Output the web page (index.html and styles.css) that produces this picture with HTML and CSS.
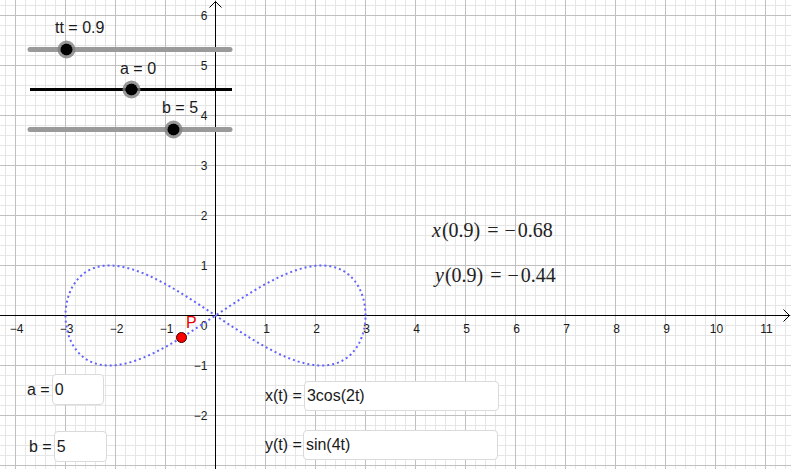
FILE: index.html
```html
<!DOCTYPE html>
<html>
<head>
<meta charset="utf-8">
<link rel="stylesheet" href="styles.css">
</head>
<body>
<div class="applet">
  <svg class="canvas" width="791" height="469" viewBox="0 0 791 469" xmlns="http://www.w3.org/2000/svg">
    <defs>
      <pattern id="grid" x="15" y="15" width="50" height="50" patternUnits="userSpaceOnUse">
        <rect x="10" y="0" width="1" height="50" fill="#e6e6e6"/>
        <rect x="20" y="0" width="1" height="50" fill="#e6e6e6"/>
        <rect x="30" y="0" width="1" height="50" fill="#e6e6e6"/>
        <rect x="40" y="0" width="1" height="50" fill="#e6e6e6"/>
        <rect x="0" y="10" width="50" height="1" fill="#e6e6e6"/>
        <rect x="0" y="20" width="50" height="1" fill="#e6e6e6"/>
        <rect x="0" y="30" width="50" height="1" fill="#e6e6e6"/>
        <rect x="0" y="40" width="50" height="1" fill="#e6e6e6"/>
        <rect x="0" y="0" width="1" height="50" fill="#c0c0c0"/>
        <rect x="0" y="0" width="50" height="1" fill="#c0c0c0"/>
      </pattern>
    </defs>
    <rect x="0" y="0" width="791" height="469" fill="#fff"/>
    <rect x="0" y="0" width="791" height="469" fill="url(#grid)"/>

    <!-- axes -->
    <g class="axis">
      <line x1="0" y1="315.5" x2="790" y2="315.5"/>
      <line x1="215.5" y1="1.5" x2="215.5" y2="469"/>
      <polyline points="783.5,309.5 789.5,315.5 783.5,321.5"/>
      <polyline points="209.5,7.5 215.5,1.5 221.5,7.5"/>
    </g>

    <g class="ticks xt">
      <text x="16.5" y="332.5">−4</text>
      <text x="66.5" y="332.5">−3</text>
      <text x="116.5" y="332.5">−2</text>
      <text x="166.5" y="332.5">−1</text>
      <text x="266.5" y="332.5">1</text>
      <text x="316.5" y="332.5">2</text>
      <text x="366.5" y="332.5">3</text>
      <text x="416.5" y="332.5">4</text>
      <text x="466.5" y="332.5">5</text>
      <text x="516.5" y="332.5">6</text>
      <text x="566.5" y="332.5">7</text>
      <text x="616.5" y="332.5">8</text>
      <text x="666.5" y="332.5">9</text>
      <text x="716.5" y="332.5">10</text>
      <text x="766.5" y="332.5">11</text>
    </g>
    <g class="ticks yt">
      <text x="207.5" y="330">0</text>
      <text x="207.5" y="20">6</text>
      <text x="207.5" y="70">5</text>
      <text x="207.5" y="120">4</text>
      <text x="207.5" y="170">3</text>
      <text x="207.5" y="220">2</text>
      <text x="207.5" y="270">1</text>
      <text x="207.5" y="370">−1</text>
      <text x="207.5" y="420">−2</text>
    </g>

    <!-- curve -->
    <path id="curve" class="curve" d=""/>

    <!-- point P -->
    <circle class="pt" cx="181.5" cy="337.5" r="5"/>
    <text class="plabel" x="186" y="327.5">P</text>

    <!-- sliders -->
    <g class="slider">
      <line class="track grey" x1="30" y1="49.5" x2="230" y2="49.5"/>
      <circle class="halo" cx="66.5" cy="49.5" r="7.5"/>
      <circle class="knob" cx="66.5" cy="49.5" r="6"/>
      <text class="slabel" x="55" y="33">tt = 0.9</text>
    </g>
    <g class="slider">
      <line class="track black" x1="30" y1="89.5" x2="232" y2="89.5"/>
      <circle class="halo" cx="131.5" cy="89.5" r="7.5"/>
      <circle class="knob" cx="131.5" cy="89.5" r="6"/>
      <text class="slabel" x="120" y="74">a = 0</text>
    </g>
    <g class="slider">
      <line class="track grey" x1="30" y1="129.5" x2="230" y2="129.5"/>
      <circle class="halo" cx="173.5" cy="129.5" r="7.5"/>
      <circle class="knob" cx="173.5" cy="129.5" r="6"/>
      <text class="slabel" x="162" y="113">b = 5</text>
    </g>
  </svg>

  <div class="formula f1"><i>x</i>(0.9)<span class="rel">=</span><span class="neg">−</span>0.68</div>
  <div class="formula f2"><i>y</i>(0.9)<span class="rel">=</span><span class="neg">−</span>0.44</div>

  <div class="field fa"><span class="lbl">a =</span><div class="box">0</div></div>
  <div class="field fb"><span class="lbl">b =</span><div class="box">5</div></div>
  <div class="field fx"><span class="lbl">x(t) =</span><div class="box wide">3cos(2t)</div></div>
  <div class="field fy"><span class="lbl">y(t) =</span><div class="box wide">sin(4t)</div></div>
</div>
<script src="script.js"></script>
</body>
</html>
```
FILE: styles.css
```css
html, body {
  margin: 0;
  padding: 0;
  background: #fff;
}
.applet {
  position: relative;
  width: 791px;
  height: 469px;
  overflow: hidden;
  font-family: "Liberation Sans", Arial, sans-serif;
}
.canvas {
  display: block;
}
.axis line,
.axis polyline {
  stroke: #000;
  stroke-width: 1;
  fill: none;
}
.ticks text {
  font-family: "Liberation Sans", Arial, sans-serif;
  font-size: 12px;
  fill: #1a1a1a;
}
.xt text {
  text-anchor: middle;
}
.yt text {
  text-anchor: end;
}
.curve {
  fill: none;
  stroke: #6262ff;
  stroke-width: 2;
  stroke-dasharray: 2 3;
}
.pt {
  fill: #ff0000;
  stroke: #3a0000;
  stroke-width: 1;
}
.plabel {
  font-family: "Liberation Sans", Arial, sans-serif;
  font-size: 16px;
  fill: #e60000;
}
.track {
  stroke-linecap: round;
}
.track.grey {
  stroke: #9a9a9a;
  stroke-width: 5;
}
.track.black {
  stroke: #000;
  stroke-width: 3;
  stroke-linecap: butt;
}
.halo {
  fill: none;
  stroke: #808080;
  stroke-opacity: 0.8;
  stroke-width: 3;
}
.knob {
  fill: #000;
}
.slabel {
  font-family: "Liberation Sans", Arial, sans-serif;
  font-size: 16px;
  fill: #1a1a1a;
}
.formula {
  position: absolute;
  font-family: "Liberation Serif", "Times New Roman", serif;
  font-size: 20px;
  line-height: 1;
  color: #222;
  white-space: nowrap;
}
.formula i {
  font-style: italic;
  margin-right: 1px;
}
.formula .rel {
  margin: 0 6px 0 7px;
}
.formula .neg {
  margin-right: 2px;
}
.f1 {
  left: 432px;
  top: 220px;
}
.f2 {
  left: 435px;
  top: 265px;
}
.field {
  position: absolute;
  display: flex;
  align-items: center;
  gap: 2px;
  font-size: 16px;
  color: #1a1a1a;
}
.box {
  box-sizing: border-box;
  width: 52px;
  height: 31px;
  border: 1.5px solid #dadada;
  border-radius: 4px;
  background: #fff;
  padding-left: 2px;
  display: flex;
  align-items: center;
}
.box.wide {
  width: 195px;
  height: 30px;
}
.fa {
  left: 27px;
  top: 374px;
}
.fb {
  left: 29px;
  top: 431px;
}
.fb .box {
  width: 53px;
}
.fx {
  left: 265px;
  top: 381px;
}
.fy {
  left: 265px;
  top: 430px;
  gap: 1px;
}
```
FILE: script.js
```js
(function () {
  var pts = [];
  var n = 900;
  for (var i = 0; i <= n; i++) {
    var t = Math.PI * i / n;
    var x = 215.5 + 50 * 3 * Math.cos(2 * t);
    var y = 315.5 - 50 * Math.sin(4 * t);
    pts.push(x.toFixed(2) + ',' + y.toFixed(2));
  }
  document.getElementById('curve').setAttribute('d', 'M' + pts.join('L') + 'Z');
})();
```
